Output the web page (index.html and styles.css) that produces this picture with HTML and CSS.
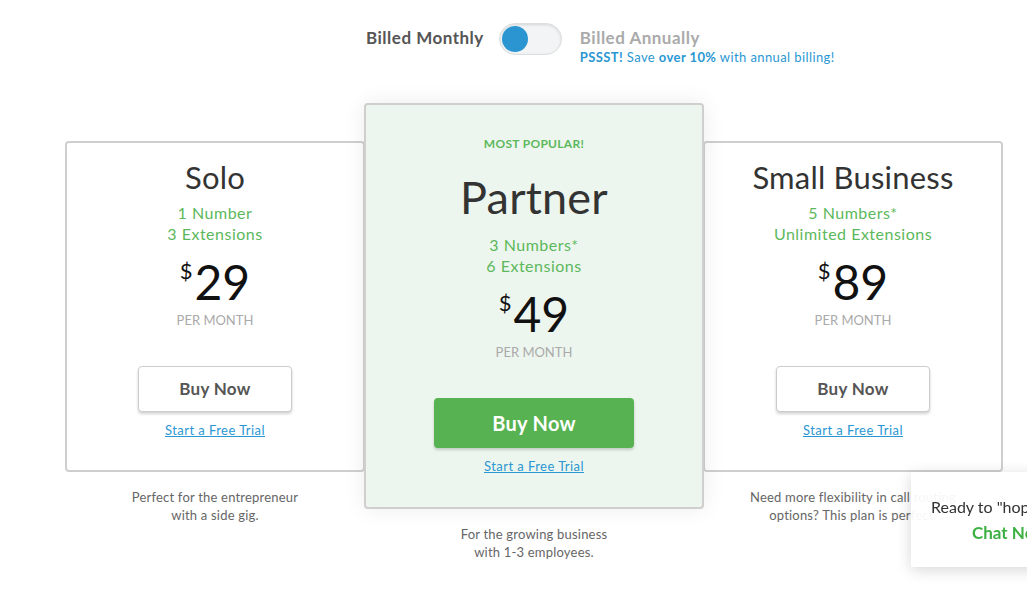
FILE: index.html
```html
<!DOCTYPE html>
<html lang="en">
<head>
  <meta charset="UTF-8">
  <meta name="viewport" content="width=device-width, initial-scale=1.0">
  <title>Pricing</title>
  <link rel="stylesheet" href="styles.css">
</head>
<body>

<div class="pricing">
  <div class="billing">
    <span class="billing-label active">Billed Monthly</span>
    <button class="toggle" aria-label="Toggle billing"><span class="knob"></span></button>
    <div class="billing-annual">
      <span class="billing-label">Billed Annually</span>
      <div class="psst"><b>PSSST!</b> Save <b>over 10%</b> with annual billing!</div>
    </div>
  </div>

  <div class="plans">
    <div class="plan">
      <div class="card">
        <h2 class="plan-name">Solo</h2>
        <div class="features">1 Number<br>3 Extensions</div>
        <div class="price"><sup>$</sup>29</div>
        <div class="per">PER MONTH</div>
        <a class="buy" href="#">Buy Now</a>
        <a class="trial" href="#">Start a Free Trial</a>
      </div>
      <p class="desc">Perfect for the entrepreneur<br>with a side gig.</p>
    </div>

    <div class="plan featured">
      <div class="card">
        <div class="badge">MOST POPULAR!</div>
        <h2 class="plan-name">Partner</h2>
        <div class="features">3 Numbers*<br>6 Extensions</div>
        <div class="price"><sup>$</sup>49</div>
        <div class="per">PER MONTH</div>
        <a class="buy" href="#">Buy Now</a>
        <a class="trial" href="#">Start a Free Trial</a>
      </div>
      <p class="desc">For the growing business<br>with 1-3 employees.</p>
    </div>

    <div class="plan">
      <div class="card">
        <h2 class="plan-name">Small Business</h2>
        <div class="features">5 Numbers*<br>Unlimited Extensions</div>
        <div class="price"><sup>$</sup>89</div>
        <div class="per">PER MONTH</div>
        <a class="buy" href="#">Buy Now</a>
        <a class="trial" href="#">Start a Free Trial</a>
      </div>
      <p class="desc">Need more flexibility in call routing<br>options? This plan is perfect.</p>
    </div>
  </div>
</div>

<div class="chat-popup">
  <p>Ready to "hop" on board?</p>
  <a href="#">Chat Now</a>
</div>

</body>
</html>
```

FILE: styles.css
```css
body {
  margin: 0;
  font-family: Lato, "Open Sans", sans-serif;
  background: #ffffff;
  color: #333333;
}

.pricing {
  width: 938px;
  margin-left: 65px;
  padding-top: 24px;
}

/* billing switch */
.billing {
  display: flex;
  align-items: flex-start;
  padding-left: 301px;
}

.billing-label {
  display: block;
  font-size: 17px;
  font-weight: bold;
  line-height: 28px;
  letter-spacing: 0.5px;
  color: #aaaaaa;
}

.billing-label.active {
  color: #555555;
}

.toggle {
  width: 63px;
  height: 32px;
  padding: 0;
  margin: -1px 18px 0 15px;
  border: 1px solid #dcdfdf;
  border-radius: 16px;
  background: #f2f4f5;
  box-shadow: inset 0 1px 3px rgba(0, 0, 0, 0.12);
  display: flex;
  align-items: center;
  cursor: pointer;
}

.knob {
  width: 26px;
  height: 26px;
  margin-left: 2px;
  border-radius: 50%;
  background: #2a95d0;
}

.psst {
  font-size: 13px;
  letter-spacing: 0.4px;
  color: #2a97d2;
  margin-top: -3px;
}

/* plans */
.plans {
  display: flex;
  align-items: flex-start;
  margin-top: 38px;
}

.plan {
  width: 300px;
  text-align: center;
}

.plan .card {
  margin-top: 38px;
  height: 331px;
  box-sizing: border-box;
  border: 2px solid #cfcfcf;
  border-radius: 4px;
  background: #ffffff;
  padding-top: 16px;
}

.plan-name {
  margin: 0;
  font-size: 31px;
  font-weight: normal;
  line-height: 36px;
  letter-spacing: 0.2px;
  color: #333333;
}

.features {
  margin-top: 7px;
  font-size: 16px;
  line-height: 21px;
  letter-spacing: 0.5px;
  color: #5cb85c;
}

.price {
  margin-top: 14px;
  font-size: 48px;
  line-height: 48px;
  color: #111111;
}

.price sup {
  font-size: 22px;
  vertical-align: top;
  line-height: 26px;
  margin-right: 2px;
}

.per {
  margin-top: 6px;
  font-size: 13px;
  line-height: 16px;
  color: #aaaaaa;
}

.buy {
  display: block;
  width: 154px;
  height: 46px;
  box-sizing: border-box;
  margin: 38px auto 0;
  border: 1px solid #cccccc;
  border-radius: 4px;
  background: #ffffff;
  box-shadow: 0 2px 3px rgba(0, 0, 0, 0.18);
  font-size: 17px;
  font-weight: bold;
  line-height: 44px;
  letter-spacing: 0.3px;
  color: #555555;
  text-decoration: none;
}

.trial {
  display: inline-block;
  margin-top: 10px;
  font-size: 13px;
  line-height: 16px;
  letter-spacing: 0.45px;
  color: #2a97d2;
}

.desc {
  margin: 16px 0 0;
  font-size: 13px;
  line-height: 18px;
  letter-spacing: 0.2px;
  color: #666666;
}

/* featured plan */
.plan.featured {
  width: 340px;
  margin: 0 -1px;
  position: relative;
  z-index: 1;
}

.plan.featured .card {
  margin-top: 0;
  height: 406px;
  background: #edf6ee;
  padding-top: 31px;
  box-shadow: 0 0 22px rgba(0, 0, 0, 0.08);
}

.badge {
  font-size: 12px;
  font-weight: bold;
  line-height: 16px;
  letter-spacing: 0.3px;
  color: #5cb85c;
}

.featured .plan-name {
  margin-top: 19px;
  font-size: 45px;
  line-height: 52px;
}

.featured .features {
  margin-top: 11px;
}

.featured .buy {
  width: 200px;
  height: 50px;
  margin-top: 38px;
  border: none;
  background: #57b251;
  font-size: 20px;
  line-height: 50px;
  color: #ffffff;
}

/* chat popup */
.chat-popup {
  position: fixed;
  left: 911px;
  top: 472px;
  width: 200px;
  height: 95px;
  box-sizing: border-box;
  padding: 24px 0 0 20px;
  background: rgba(255, 255, 255, 0.94);
  box-shadow: 0 3px 14px rgba(0, 0, 0, 0.16);
  z-index: 5;
}

.chat-popup p {
  margin: 0;
  font-family: Lato, sans-serif;
  font-size: 16px;
  line-height: 22px;
  white-space: nowrap;
  color: #333333;
}

.chat-popup a {
  display: inline-block;
  margin: 4px 0 0 41px;
  font-family: Lato, sans-serif;
  font-size: 17px;
  font-weight: bold;
  color: #3cb043;
  text-decoration: none;
}
```
